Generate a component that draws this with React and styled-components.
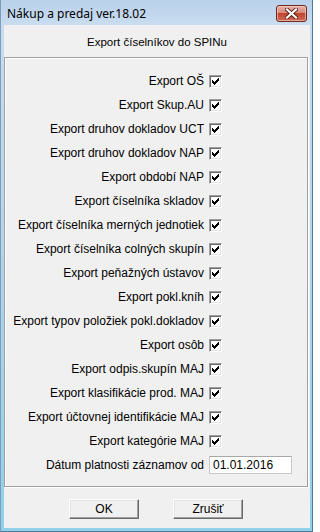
import React from 'react'
import styled, { createGlobalStyle } from 'styled-components'

const GlobalStyle = createGlobalStyle`
  html, body {
    margin: 0;
    padding: 0;
    background: #ffffff;
  }
  body {
    font-family: "Liberation Sans", Arial, sans-serif;
  }
`

const exportItems = [
  'Export OŠ',
  'Export Skup.AU',
  'Export druhov dokladov UCT',
  'Export druhov dokladov NAP',
  'Export období NAP',
  'Export číselníka skladov',
  'Export číselníka merných jednotiek',
  'Export číselníka colných skupín',
  'Export peňažných ústavov',
  'Export pokl.kníh',
  'Export typov položiek pokl.dokladov',
  'Export osôb',
  'Export odpis.skupín MAJ',
  'Export klasifikácie prod. MAJ',
  'Export účtovnej identifikácie MAJ',
  'Export kategórie MAJ',
]

const Window = styled.div`
  width: 313px;
  height: 532px;
  box-sizing: border-box;
  display: flex;
  flex-direction: column;
  padding: 0 2px 3px 3px;
  background: linear-gradient(180deg, #b9d1ea 0px, #c9dcf0 24px, #a9d3ec 60%, #8fd0ea 100%);
  border-left: 1px solid #7f9db9;
  border-bottom: 1px solid #4f7a99;
  border-right: 1px solid #4f7a99;
`

const TitleBar = styled.div`
  height: 25px;
  display: flex;
  align-items: center;
  padding: 0 3px 0 3px;
  flex-shrink: 0;
`

const TitleText = styled.span`
  font-family: "Noto Sans", "Open Sans", sans-serif;
  font-size: 12px;
  color: #000;
  padding-top: 1px;
`

const CloseButton = styled.div`
  margin-left: auto;
  margin-top: 2px;
  width: 31px;
  height: 17px;
  box-sizing: border-box;
  border: 1px solid #6d2a22;
  border-radius: 3px;
  background: linear-gradient(180deg, #e8b0a6 0%, #d98a7c 45%, #c2452f 50%, #cf6a55 100%);
  box-shadow: inset 0 0 0 1px rgba(255, 220, 210, 0.55);
  display: flex;
  align-items: center;
  justify-content: center;
`

const Client = styled.div`
  flex: 1;
  background: #f0f0f0;
  display: flex;
  flex-direction: column;
`

const Heading = styled.div`
  height: 32px;
  display: flex;
  align-items: center;
  justify-content: center;
  font-size: 11.5px;
  color: #000;
  padding-top: 1px;
  box-sizing: border-box;
`

const GroupBox = styled.div`
  margin: 0 2px 0 0;
  border: 1px solid #a0a0a0;
  box-shadow: inset 1px 1px 0 #ffffff, 1px 1px 0 #ffffff;
  padding: 11px 0 9px 0;
  display: flex;
  flex-direction: column;
`

const Row = styled.div`
  height: 24px;
  display: flex;
  align-items: center;
  gap: 5px;
`

const Label = styled.span`
  width: 199px;
  flex-shrink: 0;
  text-align: right;
  font-size: 12px;
  color: #000;
  white-space: nowrap;
`

const CheckBox = styled.span`
  width: 13px;
  height: 13px;
  box-sizing: border-box;
  background: #ffffff;
  border-top: 1px solid #a0a0a0;
  border-left: 1px solid #a0a0a0;
  border-right: 1px solid #ffffff;
  border-bottom: 1px solid #ffffff;
  box-shadow: inset 1px 1px 0 #696969, inset -1px -1px 0 #e3e3e3;
  display: block;
  position: relative;
`

const CheckMark = styled.svg`
  position: absolute;
  left: -1px;
  top: -1px;
`

const DateInput = styled.div`
  width: 83px;
  height: 18px;
  box-sizing: border-box;
  border: 1px solid #c8c8c8;
  border-top-color: #a8a8a8;
  background: #ffffff;
  font-size: 12px;
  color: #000;
  padding-left: 3px;
  display: flex;
  align-items: center;
`

const ButtonBar = styled.div`
  display: flex;
  justify-content: center;
  gap: 34px;
  padding: 12px 0 0 0;
  margin-right: 2px;
`

const Button = styled.button`
  width: 70px;
  height: 20px;
  box-sizing: border-box;
  margin: 0;
  padding: 0;
  background: #f0f0f0;
  border-top: 1px solid #ffffff;
  border-left: 1px solid #ffffff;
  border-right: 1px solid #696969;
  border-bottom: 1px solid #696969;
  box-shadow: inset -1px -1px 0 #a0a0a0, inset 1px 1px 0 #e3e3e3;
  font-family: "Liberation Sans", Arial, sans-serif;
  font-size: 12px;
  color: #000;
`

function Check() {
  return (
    <CheckBox>
      <CheckMark width="13" height="13" viewBox="0 0 13 13" shapeRendering="crispEdges">
        <path
          d="M3 5h1v3h-1z M4 6h1v3h-1z M5 7h1v3h-1z M6 6h1v3h-1z M7 5h1v3h-1z M8 4h1v3h-1z M9 3h1v3h-1z"
          fill="#000"
        />
      </CheckMark>
    </CheckBox>
  )
}

function CloseIcon() {
  return (
    <svg width="13" height="11" viewBox="0 0 13 11">
      <path d="M2 1.5 L11 9.5 M11 1.5 L2 9.5" stroke="#5a2018" strokeWidth="4" strokeLinecap="square" />
      <path d="M2 1.5 L11 9.5 M11 1.5 L2 9.5" stroke="#ffffff" strokeWidth="2.2" strokeLinecap="square" />
    </svg>
  )
}

export default function App() {
  return (
    <>
      <GlobalStyle />
      <Window>
        <TitleBar>
          <TitleText>Nákup a predaj ver.18.02</TitleText>
          <CloseButton>
            <CloseIcon />
          </CloseButton>
        </TitleBar>
        <Client>
          <Heading>Export číselníkov do SPINu</Heading>
          <GroupBox>
            {exportItems.map((item) => (
              <Row key={item}>
                <Label>{item}</Label>
                <Check />
              </Row>
            ))}
            <Row>
              <Label>Dátum platnosti záznamov od</Label>
              <DateInput>01.01.2016</DateInput>
            </Row>
          </GroupBox>
          <ButtonBar>
            <Button>OK</Button>
            <Button>Zrušiť</Button>
          </ButtonBar>
        </Client>
      </Window>
    </>
  )
}
